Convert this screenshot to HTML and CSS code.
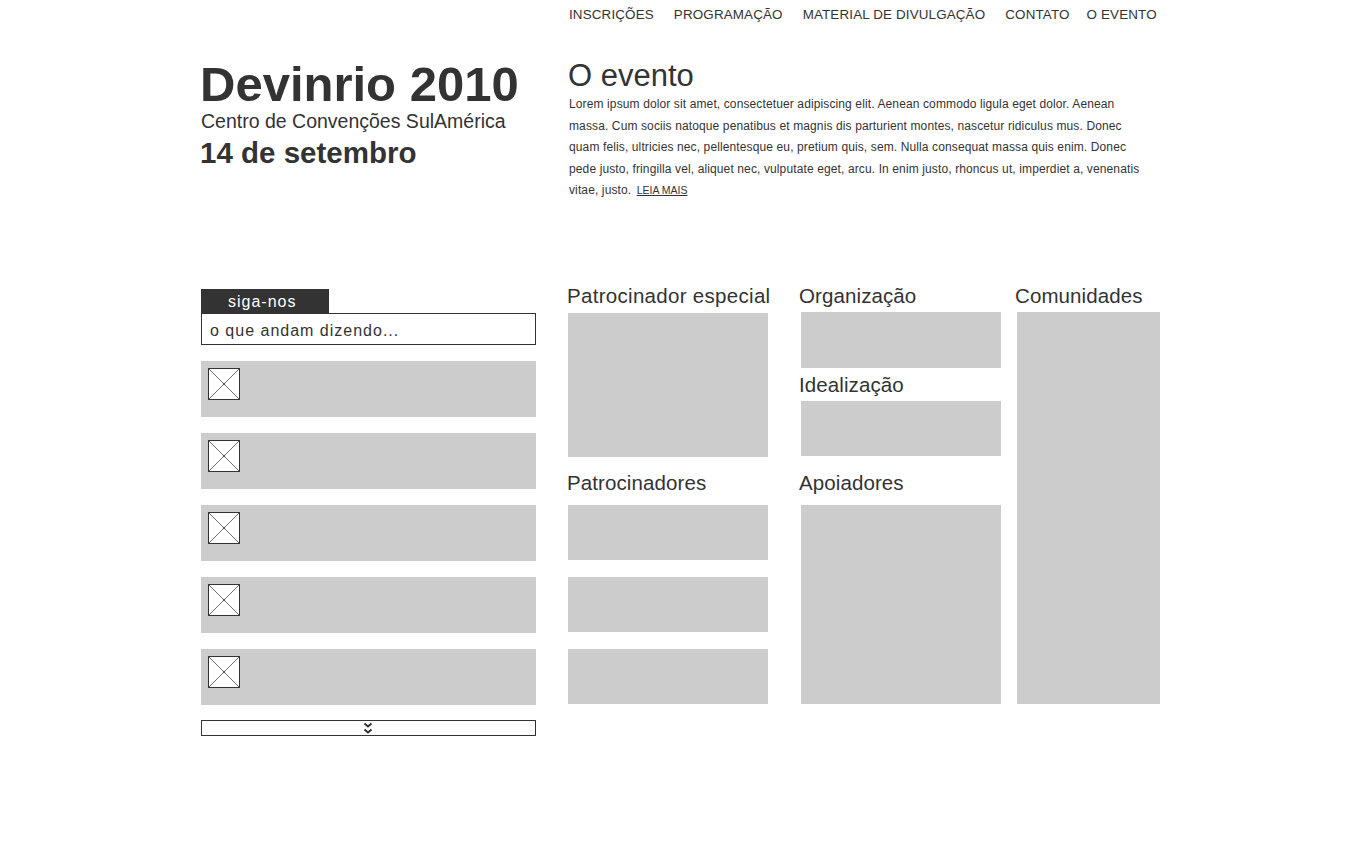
FILE: index.html
```html
<!DOCTYPE html>
<html lang="pt-BR">
<head>
<meta charset="utf-8">
<title>Devinrio 2010</title>
<link rel="stylesheet" href="styles.css">
</head>
<body>
<div class="page">
  <header class="header">
    <div class="header-spacer"></div>
    <nav class="nav">
      <a href="#">INSCRIÇÕES</a>
      <a href="#">PROGRAMAÇÃO</a>
      <a href="#">MATERIAL DE DIVULGAÇÃO</a>
      <a href="#">CONTATO</a>
      <a href="#" class="nav-last">O EVENTO</a>
    </nav>
    <div class="brand">
      <h1 class="brand-title">Devinrio 2010</h1>
      <div class="brand-place">Centro de Convenções SulAmérica</div>
      <div class="brand-date">14 de setembro</div>
    </div>
    <section class="about">
      <h2 class="about-title">O evento</h2>
      <p class="about-text">Lorem ipsum dolor sit amet, consectetuer adipiscing elit. Aenean commodo ligula eget dolor. Aenean massa. Cum sociis natoque penatibus et magnis dis parturient montes, nascetur ridiculus mus. Donec quam felis, ultricies nec, pellentesque eu, pretium quis, sem. Nulla consequat massa quis enim. Donec pede justo, fringilla vel, aliquet nec, vulputate eget, arcu. In enim justo, rhoncus ut, imperdiet a, venenatis vitae, justo. <a href="#" class="more">LEIA MAIS</a></p>
    </section>
  </header>

  <main class="main">
    <aside class="social">
      <div class="tab">siga-nos</div>
      <div class="saying">o que andam dizendo...</div>
      <ul class="feed">
        <li class="feed-item"><svg class="avatar" width="32" height="32" viewBox="0 0 32 32"><rect x="0.5" y="0.5" width="31" height="31" fill="#fff" stroke="#333"/><path d="M1 1L31 31M31 1L1 31" stroke="#333" stroke-width="0.7"/><circle cx="16" cy="16" r="1" fill="#333"/></svg></li>
        <li class="feed-item"><svg class="avatar" width="32" height="32" viewBox="0 0 32 32"><rect x="0.5" y="0.5" width="31" height="31" fill="#fff" stroke="#333"/><path d="M1 1L31 31M31 1L1 31" stroke="#333" stroke-width="0.7"/><circle cx="16" cy="16" r="1" fill="#333"/></svg></li>
        <li class="feed-item"><svg class="avatar" width="32" height="32" viewBox="0 0 32 32"><rect x="0.5" y="0.5" width="31" height="31" fill="#fff" stroke="#333"/><path d="M1 1L31 31M31 1L1 31" stroke="#333" stroke-width="0.7"/><circle cx="16" cy="16" r="1" fill="#333"/></svg></li>
        <li class="feed-item"><svg class="avatar" width="32" height="32" viewBox="0 0 32 32"><rect x="0.5" y="0.5" width="31" height="31" fill="#fff" stroke="#333"/><path d="M1 1L31 31M31 1L1 31" stroke="#333" stroke-width="0.7"/><circle cx="16" cy="16" r="1" fill="#333"/></svg></li>
        <li class="feed-item"><svg class="avatar" width="32" height="32" viewBox="0 0 32 32"><rect x="0.5" y="0.5" width="31" height="31" fill="#fff" stroke="#333"/><path d="M1 1L31 31M31 1L1 31" stroke="#333" stroke-width="0.7"/><circle cx="16" cy="16" r="1" fill="#333"/></svg></li>
      </ul>
      <div class="more-bar"><svg width="10" height="14" viewBox="0 0 10 14"><path d="M1.5 2.5L5 5.5L8.5 2.5M1.5 8.5L5 11.5L8.5 8.5" fill="none" stroke="#333" stroke-width="2"/></svg></div>
    </aside>

    <section class="col col-sponsors">
      <h3 class="col-title">Patrocinador especial</h3>
      <div class="box box-special"></div>
      <h3 class="col-title col-title-lower">Patrocinadores</h3>
      <div class="box box-sponsor first"></div>
      <div class="box box-sponsor"></div>
      <div class="box box-sponsor"></div>
    </section>

    <section class="col col-org">
      <h3 class="col-title">Organização</h3>
      <div class="box box-org"></div>
      <h3 class="col-title col-title-mid">Idealização</h3>
      <div class="box box-ideal"></div>
      <h3 class="col-title col-title-lower2">Apoiadores</h3>
      <div class="box box-support"></div>
    </section>

    <section class="col col-comm">
      <h3 class="col-title">Comunidades</h3>
      <div class="box box-comm"></div>
    </section>
  </main>
</div>
</body>
</html>
```

FILE: styles.css
```css
* { box-sizing: border-box; }

html, body {
  margin: 0;
  padding: 0;
  background: #fff;
}

body {
  font-family: "Liberation Sans", Arial, sans-serif;
  color: #333;
}

.page {
  width: 960px;
  margin: 0 auto;
}

/* Header */
.header {
  display: grid;
  grid-template-columns: 368px 592px;
}

.nav {
  display: flex;
  gap: 20px;
  padding: 7px 0 0 1px;
  height: 60px;
  font-size: 13.4px;
  letter-spacing: 0.15px;
  line-height: 16px;
  white-space: nowrap;
}

.nav a {
  flex: none;
  color: #333;
  text-decoration: none;
}

.nav .nav-last { margin-left: -3px; }

.brand-title {
  margin: 0;
  font-size: 49px;
  line-height: 48px;
  font-weight: bold;
}

.brand-place {
  margin-top: 2px;
  padding-left: 1px;
  font-size: 19.5px;
  line-height: 22px;
}

.brand-date {
  margin-top: 5px;
  font-size: 29.5px;
  line-height: 32px;
  font-weight: bold;
}

.about-title {
  margin: 0;
  font-size: 31px;
  line-height: 32px;
  font-weight: normal;
}

.about-text {
  width: 580px;
  margin: 2px 0 0;
  padding-left: 1px;
  font-size: 12px;
  letter-spacing: 0.12px;
  line-height: 21.5px;
}

.about-text .more {
  margin-left: 2px;
  color: #333;
  font-size: 10.5px;
  letter-spacing: 0;
  text-decoration: underline;
}

/* Main */
.main {
  display: flex;
  margin-top: 82.5px;
}

.social {
  width: 335px;
  margin: 5px 0 0 1px;
}

.tab {
  width: 128px;
  height: 24px;
  background: #333;
  color: #fff;
  font-size: 16px;
  letter-spacing: 1px;
  line-height: 24px;
  padding: 1px 0 0 27px;
}

.saying {
  height: 32px;
  border: 1px solid #333;
  font-size: 16px;
  letter-spacing: 1px;
  line-height: 30px;
  padding: 2px 0 0 8px;
}

.feed {
  list-style: none;
  margin: 16px 0 0;
  padding: 0;
  display: flex;
  flex-direction: column;
  gap: 16px;
}

.feed-item {
  height: 56px;
  background: #ccc;
  padding: 7px;
}

.avatar { display: block; }

.more-bar {
  margin-top: 15px;
  height: 16px;
  border: 1px solid #333;
  display: flex;
  justify-content: center;
  align-items: center;
}

.more-bar svg {
  display: block;
  margin-left: -1px;
}

.col-title {
  margin: 0;
  font-size: 20.5px;
  letter-spacing: 0.1px;
  line-height: 24px;
  font-weight: normal;
  white-space: nowrap;
}

.box { background: #ccc; }

.col-sponsors {
  width: 200px;
  margin-left: 32px;
}

.col-sponsors .col-title { margin-left: -1px; }
.col-sponsors .col-title:first-child { letter-spacing: 0.3px; }

.box-special { height: 144px; margin-top: 5px; }
.col-title-lower { margin-top: 14px !important; }
.box-sponsor { height: 55px; margin-top: 17px; }
.box-sponsor.first { margin-top: 10px; }

.col-org {
  width: 200px;
  margin-left: 33px;
}

.col-org .col-title { margin-left: -2px; }

.box-org { height: 56px; margin-top: 4px; }
.col-title-mid { margin-top: 5px !important; }
.box-ideal { height: 55px; margin-top: 4px; }
.col-title-lower2 { margin-top: 15px !important; }
.box-support { height: 199px; margin-top: 10px; }

.col-comm {
  width: 143px;
  margin-left: 16px;
}

.col-comm .col-title { margin-left: -2px; }

.box-comm { height: 392px; margin-top: 4px; }
```
